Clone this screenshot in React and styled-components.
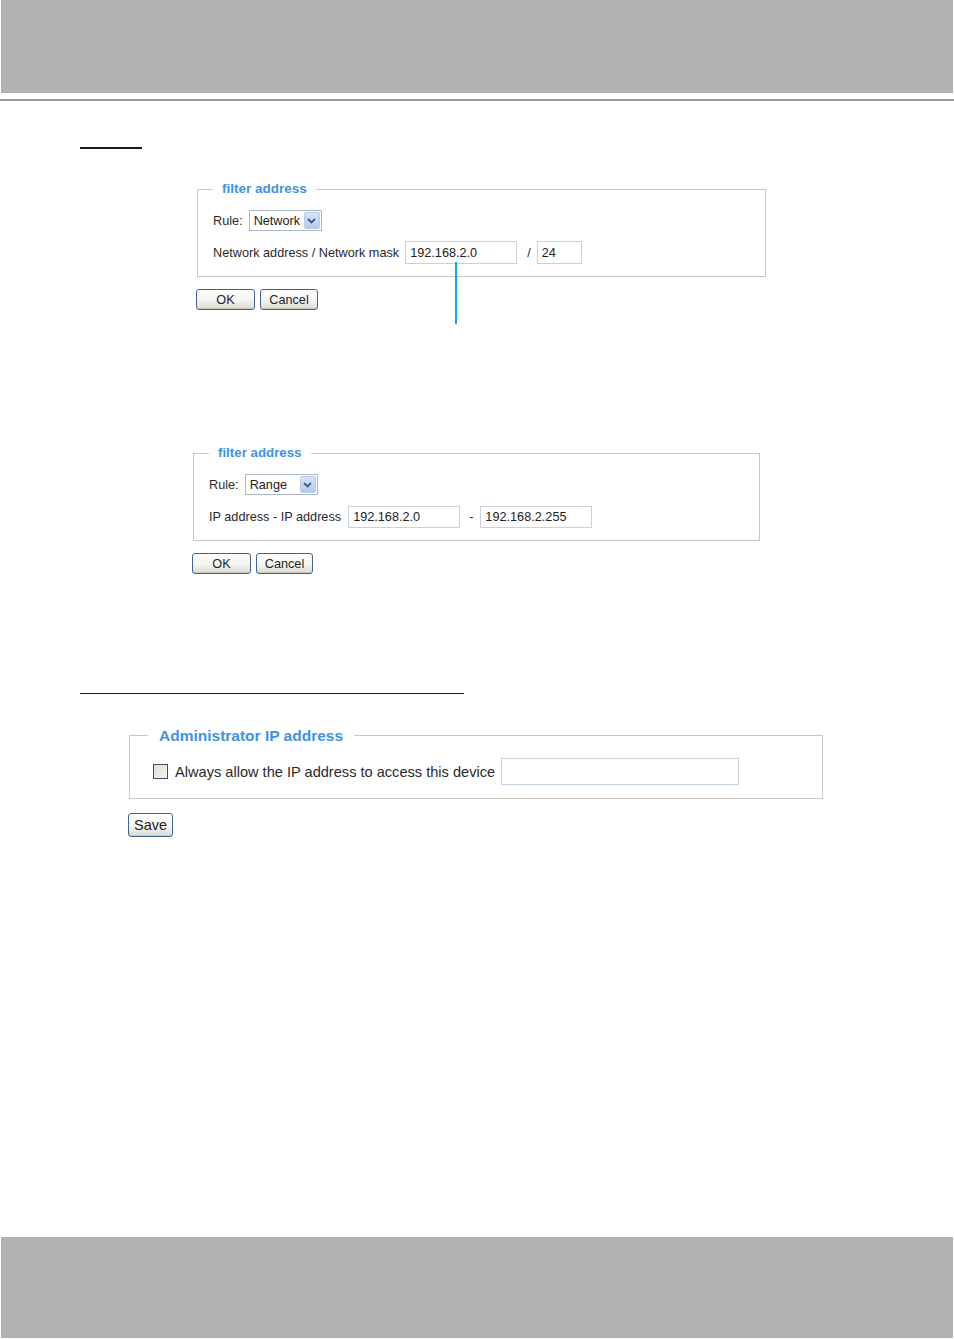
import styled, { createGlobalStyle } from 'styled-components'

const GlobalStyle = createGlobalStyle`
body {
  margin: 0;
  background: #ffffff;
  font-family: "Liberation Sans", Arial, sans-serif;
  color: #222;
}
`

const Page = styled.div`
width: 954px;
min-height: 1339px;
display: flex;
flex-direction: column;
`

const Header = styled.div`
height: 93px;
margin: 0 1px;
background-color: #b2b2b2;
`

const HeaderLine = styled.div`
height: 2px;
margin-top: 6px;
background-color: #9a9a9a;
`

const Underline = styled.div`
height: ${p => p.thick ? 2 : 1}px;
width: ${p => p.width}px;
margin-left: 80px;
margin-top: ${p => p.top}px;
background-color: #1a1a1a;
`

const Block = styled.div`
position: relative;
margin-left: ${p => p.left}px;
margin-top: ${p => p.top}px;
`

const Fieldset = styled.fieldset`
box-sizing: border-box;
width: ${p => p.width}px;
margin: 0;
padding: ${p => p.pad};
border: 1px solid #cbc7c0;
display: flex;
flex-direction: column;
gap: ${p => p.gap || 0}px;
`

const Legend = styled.legend`
padding: 0 ${p => p.side}px;
font-weight: bold;
font-size: ${p => p.size}px;
line-height: ${p => p.lh}px;
color: #3f93e0;
`

const Row = styled.div`
display: flex;
align-items: center;
height: ${p => p.h}px;
font-size: 12.7px;
color: #2a2a2a;
`

const Label = styled.span`
margin-right: ${p => p.gap}px;
white-space: nowrap;
`

const Sep = styled.span`
margin: 0 ${p => p.right}px 0 ${p => p.left}px;
`

const TextInput = styled.input`
box-sizing: border-box;
width: ${p => p.width}px;
height: ${p => p.h || 23}px;
margin: 0 0 0 ${p => p.ml || 0}px;
padding: 0 4px;
border: 1px solid #c8d2de;
font-family: "Liberation Sans", Arial, sans-serif;
font-size: 12.7px;
color: #222;
background: #fff;
outline: none;
`

const SelectBox = styled.div`
box-sizing: border-box;
width: ${p => p.width}px;
height: 21px;
display: flex;
align-items: center;
justify-content: space-between;
padding: 0 1px 0 4px;
border: 1px solid #a9b8cc;
background: #fff;
color: #222;
`

const ArrowBox = styled.span`
box-sizing: border-box;
width: 16px;
height: 17px;
display: flex;
align-items: center;
justify-content: center;
border: 1px solid #b9cbeb;
border-radius: 2px;
background: linear-gradient(#d6e2f8, #b7caee);
`

const ButtonRow = styled.div`
display: flex;
gap: 5px;
margin-top: ${p => p.top}px;
margin-left: -1px;
`

const Button = styled.button`
box-sizing: border-box;
width: ${p => p.width}px;
height: ${p => p.h}px;
padding: 0;
border: 1px solid #3d6690;
border-radius: 3px;
background: linear-gradient(#ffffff 0%, #f4f4f0 55%, #dcdcd4 100%);
font-family: "Liberation Sans", Arial, sans-serif;
font-size: ${p => p.size}px;
color: #1e1e1e;
box-shadow: inset 0 -1px 0 #c9c9c0;
`

const Pointer = styled.div`
position: absolute;
left: ${p => p.x}px;
top: ${p => p.y}px;
width: 2px;
height: ${p => p.h}px;
background-color: #00aeef;
`

const CheckRow = styled.div`
display: flex;
align-items: center;
height: 27px;
font-size: 14.6px;
color: #2a2a2a;
`

const CheckBox = styled.span`
box-sizing: border-box;
width: 15px;
height: 15px;
margin: 0 7px 0 5px;
border: 1px solid #34506e;
background: linear-gradient(135deg, #dcdcd6, #f6f6f2);
`

const Footer = styled.div`
margin: auto 1px 1px;
height: 101px;
background-color: #b2b2b2;
`

const Chevron = () => (
  <svg width="9" height="6" viewBox="0 0 9 6">
    <path d="M1 1 L4.5 4.5 L8 1" fill="none" stroke="#3a5a8c" strokeWidth="1.8" />
  </svg>
)

const Select = ({ width, value }) => (
  <SelectBox width={width}>
    <span>{value}</span>
    <ArrowBox><Chevron /></ArrowBox>
  </SelectBox>
)

const App = () => {
  return (
    <Page>
      <GlobalStyle />
      <Header />
      <HeaderLine />
      <Underline thick width={62} top={46} />

      <Block left={197} top={32}>
        <Fieldset width={569} pad="13px 15px 12px" gap={10}>
          <Legend side={9} size={13.5} lh={16}>filter address</Legend>
          <Row h={21}>
            <Label gap={6}>Rule:</Label>
            <Select width={73} value="Network" />
          </Row>
          <Row h={23}>
            <Label gap={6}>Network address / Network mask</Label>
            <TextInput width={112} defaultValue="192.168.2.0" readOnly />
            <Sep left={10} right={6}>/</Sep>
            <TextInput width={45} defaultValue="24" readOnly />
          </Row>
        </Fieldset>
        <ButtonRow top={12}>
          <Button width={59} h={21} size={12.7}>OK</Button>
          <Button width={58} h={21} size={12.7}>Cancel</Button>
        </ButtonRow>
        <Pointer x={258} y={81} h={62} />
      </Block>

      <Block left={193} top={135}>
        <Fieldset width={567} pad="13px 15px 12px" gap={11}>
          <Legend side={9} size={13.3} lh={16}>filter address</Legend>
          <Row h={21}>
            <Label gap={6}>Rule:</Label>
            <Select width={73} value="Range" />
          </Row>
          <Row h={22}>
            <Label gap={7}>IP address - IP address</Label>
            <TextInput width={112} h={22} defaultValue="192.168.2.0" readOnly />
            <Sep left={9} right={7}>-</Sep>
            <TextInput width={112} h={22} defaultValue="192.168.2.255" readOnly />
          </Row>
        </Fieldset>
        <ButtonRow top={12}>
          <Button width={59} h={21} size={12.7}>OK</Button>
          <Button width={57} h={21} size={12.7}>Cancel</Button>
        </ButtonRow>
      </Block>

      <Underline width={384} top={119} />

      <Block left={129} top={32}>
        <Fieldset width={694} pad="13px 18px 13px" gap={0}>
          <Legend side={11} size={15.5} lh={19}>Administrator IP address</Legend>
          <CheckRow>
            <CheckBox />
            <span>Always allow the IP address to access this device</span>
            <TextInput width={238} h={27} ml={6} defaultValue="" readOnly />
          </CheckRow>
        </Fieldset>
        <ButtonRow top={14}>
          <Button width={45} h={24} size={14.5}>Save</Button>
        </ButtonRow>
      </Block>

      <Footer />
    </Page>
  )
}

export default App
